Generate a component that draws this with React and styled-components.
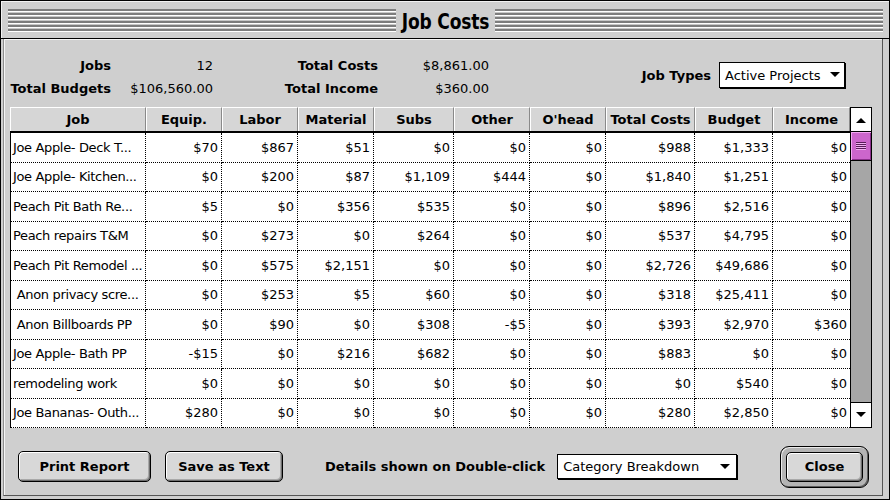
import React from 'react'
import styled, { createGlobalStyle } from 'styled-components'

const GlobalStyle = createGlobalStyle`
  html, body {
    margin: 0;
    padding: 0;
    background: #fff;
  }
  * {
    box-sizing: border-box;
  }
`

const COLS = '136px 76px 76px 76px 80px 76px 76px 89px 78px 77px'

const HEADERS = ['Job', 'Equip.', 'Labor', 'Material', 'Subs', 'Other', "O'head", 'Total Costs', 'Budget', 'Income']

const ROWS = [
  ['Joe Apple- Deck T...', '$70', '$867', '$51', '$0', '$0', '$0', '$988', '$1,333', '$0'],
  ['Joe Apple- Kitchen...', '$0', '$200', '$87', '$1,109', '$444', '$0', '$1,840', '$1,251', '$0'],
  ['Peach Pit Bath Re...', '$5', '$0', '$356', '$535', '$0', '$0', '$896', '$2,516', '$0'],
  ['Peach repairs T&M', '$0', '$273', '$0', '$264', '$0', '$0', '$537', '$4,795', '$0'],
  ['Peach Pit Remodel ...', '$0', '$575', '$2,151', '$0', '$0', '$0', '$2,726', '$49,686', '$0'],
  [' Anon privacy scre...', '$0', '$253', '$5', '$60', '$0', '$0', '$318', '$25,411', '$0'],
  [' Anon Billboards PP', '$0', '$90', '$0', '$308', '-$5', '$0', '$393', '$2,970', '$360'],
  ['Joe Apple- Bath PP', '-$15', '$0', '$216', '$682', '$0', '$0', '$883', '$0', '$0'],
  ['remodeling work', '$0', '$0', '$0', '$0', '$0', '$0', '$0', '$540', '$0'],
  ['Joe Bananas- Outh...', '$280', '$0', '$0', '$0', '$0', '$0', '$280', '$2,850', '$0'],
]

const Window = styled.div`
  width: 890px;
  height: 500px;
  border: 1px solid #000;
  background: #cfcfcf;
  display: flex;
  flex-direction: column;
  font-family: "DejaVu Sans", sans-serif;
  color: #000;
`

const TitleBar = styled.div`
  flex: none;
  height: 38px;
  padding: 2px 6px 0 7px;
  display: flex;
  align-items: center;
  border-bottom: 1px solid #000;
  box-shadow: inset 1px 1px 0 #f2f2f2;
`

const Stripes = styled.div`
  flex: 1;
  height: 23px;
  background: repeating-linear-gradient(
    to bottom,
    #7d7d7d 0,
    #7d7d7d 2px,
    #ffffff 2px,
    #ffffff 3px,
    #c8c8c8 3px,
    #c8c8c8 4px
  );
`

const Title = styled.div`
  padding: 0 6px;
  font-family: "DejaVu Sans Condensed", "DejaVu Sans", sans-serif;
  font-weight: bold;
  font-size: 19px;
  transform: scaleY(1.15);
  letter-spacing: -0.2px;
`

const Frame = styled.div`
  flex: 1;
  display: flex;
  padding: 0 6px 3px 2px;
`

const Panel = styled.div`
  flex: 1;
  display: flex;
  flex-direction: column;
  border-left: 1px solid #8e8e8e;
  border-right: 1px solid #555;
  border-bottom: 1px solid #555;
  box-shadow: inset 1px 1px 0 #f4f4f4;
`

const Info = styled.div`
  flex: none;
  height: 68px;
  padding: 15px 0 0 6px;
  display: flex;
  align-items: flex-start;
`

const InfoGrid = styled.div`
  display: grid;
  grid-template-columns: 101px 102px 165px 111px;
  grid-auto-rows: 23px;
  align-items: center;
`

const Label = styled.div`
  font-weight: bold;
  font-size: 13px;
  text-align: right;
  white-space: nowrap;
`

const Value = styled.div`
  font-size: 13px;
  text-align: right;
  white-space: nowrap;
`

const JobTypes = styled.div`
  margin: 8px 37px 0 auto;
  display: flex;
  align-items: center;
  gap: 8px;
`

const Select = styled.div`
  width: ${(p) => p.$w}px;
  height: ${(p) => p.$h}px;
  padding: 0 ${(p) => p.$pr}px 0 5px;
  display: flex;
  align-items: center;
  justify-content: space-between;
  background: #fff;
  border: 1px solid #000;
  box-shadow: 1px 1px 0 #000;
  font-size: 13px;
  white-space: nowrap;
`

const TableArea = styled.div`
  flex: none;
  display: flex;
  margin-left: 6px;
`

const Table = styled.div`
  width: 840px;
`

const HeadRow = styled.div`
  display: grid;
  grid-template-columns: ${COLS};
  height: 26px;
  border-bottom: 2px solid #000;
`

const HeadCell = styled.div`
  display: flex;
  align-items: center;
  justify-content: center;
  background: #d6d6d6;
  border-top: 1px solid #fff;
  border-left: 1px solid #fff;
  border-right: 1px solid #8a8a8a;
  font-weight: bold;
  font-size: 13px;
  white-space: nowrap;
`

const Row = styled.div`
  display: grid;
  grid-template-columns: ${COLS};
  height: 29.5px;
`

const Cell = styled.div`
  display: flex;
  align-items: center;
  justify-content: ${(p) => (p.$left ? 'flex-start' : 'flex-end')};
  padding: 0 3px 0 2px;
  background: #fff;
  border-bottom: 1px dotted #000;
  border-right: ${(p) => (p.$last ? 'none' : '1px dotted #000')};
  border-left: ${(p) => (p.$left ? '1px solid #000' : 'none')};
  font-size: 13px;
  letter-spacing: ${(p) => (p.$left ? '-0.35px' : '0')};
  white-space: pre;
  overflow: hidden;
`

const ScrollBar = styled.div`
  width: 22px;
  display: flex;
  flex-direction: column;
  border: 1px solid #000;
  background: #a6a6a6;
`

const ArrowBox = styled.div`
  flex: none;
  height: ${(p) => p.$h}px;
  display: flex;
  align-items: center;
  justify-content: center;
  background: #fff;
  border-top: ${(p) => (p.$down ? '1px solid #000' : 'none')};
  border-bottom: ${(p) => (p.$down ? 'none' : '1px solid #000')};
  margin-top: ${(p) => (p.$down ? 'auto' : '0')};
`

const Thumb = styled.div`
  flex: none;
  height: 29px;
  display: flex;
  align-items: center;
  justify-content: center;
  background: #cc66cc;
  border-bottom: 1px solid #000;
  box-shadow: inset 1px 1px 0 #f3a6f3, inset -1px -1px 0 #8a2f8a;
`

const Grip = styled.div`
  width: 10px;
  height: 8px;
  background: repeating-linear-gradient(
    to bottom,
    #5a1d5a 0,
    #5a1d5a 1px,
    #f0b0f0 1px,
    #f0b0f0 2px
  );
`

const Footer = styled.div`
  flex: 1;
  display: flex;
  align-items: center;
  padding: 10px 13px 0 14px;
`

const Button = styled.button`
  width: ${(p) => p.$w}px;
  height: ${(p) => p.$h}px;
  margin-left: ${(p) => p.$ml || 0}px;
  padding: 0;
  font-family: "DejaVu Sans", sans-serif;
  font-weight: bold;
  font-size: 13px;
  color: #000;
  background: #d8d8d8;
  border: 1px solid #000;
  border-radius: 5px;
  box-shadow: inset 1px 1px 0 #fff, inset -1px -1px 0 #6e6e6e, inset -2px -2px 0 #a8a8a8;
`

const DefaultRing = styled.div`
  width: 89px;
  height: 42px;
  margin-left: auto;
  padding: 5px;
  display: flex;
  border: 1px solid #000;
  border-radius: 9px;
  background: #b4b4b4;
  box-shadow: inset 1px 1px 0 #eaeaea, inset -1px -1px 0 #5e5e5e;
`

const FooterLabel = styled.div`
  margin-left: 42px;
  margin-right: 12px;
  font-weight: bold;
  font-size: 13px;
  white-space: nowrap;
`

const Tri = ({ up }) => (
  <svg width="10" height="6" viewBox="0 0 10 6">
    <polygon points={up ? '0,6 10,6 5,1' : '0,0 10,0 5,5'} fill="#000" />
  </svg>
)

const App = () => (
  <>
    <GlobalStyle />
    <Window>
      <TitleBar>
        <Stripes />
        <Title>Job Costs</Title>
        <Stripes />
      </TitleBar>
      <Frame>
        <Panel>
          <Info>
            <InfoGrid>
              <Label>Jobs</Label>
              <Value>12</Value>
              <Label>Total Costs</Label>
              <Value>$8,861.00</Value>
              <Label>Total Budgets</Label>
              <Value>$106,560.00</Value>
              <Label>Total Income</Label>
              <Value>$360.00</Value>
            </InfoGrid>
            <JobTypes>
              <Label>Job Types</Label>
              <Select $w={126} $h={26} $pr={4}>
                Active Projects
                <Tri />
              </Select>
            </JobTypes>
          </Info>
          <TableArea>
            <Table>
              <HeadRow>
                {HEADERS.map((h) => (
                  <HeadCell key={h}>{h}</HeadCell>
                ))}
              </HeadRow>
              {ROWS.map((r, i) => (
                <Row key={i}>
                  {r.map((v, j) => (
                    <Cell key={j} $left={j === 0} $last={j === r.length - 1}>
                      {v}
                    </Cell>
                  ))}
                </Row>
              ))}
            </Table>
            <ScrollBar>
              <ArrowBox $h={24}>
                <Tri up />
              </ArrowBox>
              <Thumb>
                <Grip />
              </Thumb>
              <ArrowBox $h={25} $down>
                <Tri />
              </ArrowBox>
            </ScrollBar>
          </TableArea>
          <Footer>
            <Button $w={133} $h={31}>Print Report</Button>
            <Button $w={118} $h={31} $ml={14}>Save as Text</Button>
            <FooterLabel>Details shown on Double-click</FooterLabel>
            <Select $w={180} $h={25} $pr={6}>
              Category Breakdown
              <Tri />
            </Select>
            <DefaultRing>
              <Button $w={77} $h={30}>Close</Button>
            </DefaultRing>
          </Footer>
        </Panel>
      </Frame>
    </Window>
  </>
)

export default App
